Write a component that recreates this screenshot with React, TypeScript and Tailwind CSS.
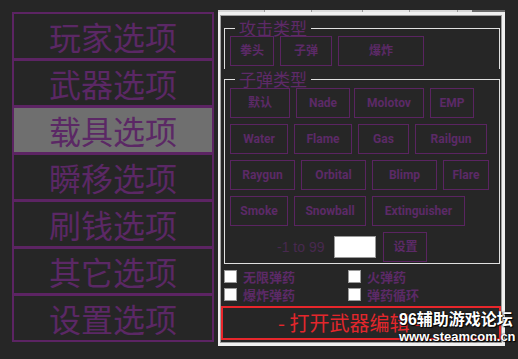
const menu = ["玩家选项", "武器选项", "载具选项", "瞬移选项", "刷钱选项", "其它选项", "设置选项"];

type Btn = { label: string; cls: string };

const attack: Btn[] = [
  { label: "拳头", cls: "w-[44px]" },
  { label: "子弹", cls: "w-[52px] ml-[6px]" },
  { label: "爆炸", cls: "w-[86px] ml-[6px]" },
];

const bulletRows: Btn[][] = [
  [
    { label: "默认", cls: "w-[60px]" },
    { label: "Nade", cls: "w-[54px] ml-[6px]" },
    { label: "Molotov", cls: "w-[70px] ml-[4px]" },
    { label: "EMP", cls: "w-[44px] ml-[6px]" },
  ],
  [
    { label: "Water", cls: "w-[58px]" },
    { label: "Flame", cls: "w-[58px] ml-[6px]" },
    { label: "Gas", cls: "w-[51px] ml-[6px]" },
    { label: "Railgun", cls: "w-[72px] ml-[6px]" },
  ],
  [
    { label: "Raygun", cls: "w-[65px]" },
    { label: "Orbital", cls: "w-[65px] ml-[6px]" },
    { label: "Blimp", cls: "w-[65px] ml-[6px]" },
    { label: "Flare", cls: "w-[46px] ml-[6px]" },
  ],
  [
    { label: "Smoke", cls: "w-[58px]" },
    { label: "Snowball", cls: "w-[72px] ml-[6px]" },
    { label: "Extinguisher", cls: "w-[93px] ml-[6px]" },
  ],
];

const PurpleButton = ({ label, cls }: Btn) => (
  <button
    className={`${cls} h-[30px] shrink-0 border border-[#5a2461] text-[#5c2a67] text-[12px] font-bold flex items-center justify-center font-['Roboto','Noto_Sans_CJK_SC',sans-serif]`}
  >
    {label}
  </button>
);

const GroupTitle = ({ text }: { text: string }) => (
  <legend className="ml-[5px] px-[4px] text-[17px] leading-[16px] text-[#5e2a68] font-['Noto_Sans_CJK_SC',sans-serif]">
    {text}
  </legend>
);

const Check = ({ label }: { label: string }) => (
  <div className="flex items-center w-[124px] h-[13px]">
    <span className="w-[13px] h-[13px] bg-white border border-[#9a9a9a]" />
    <span className="ml-[6px] text-[13px] leading-[13px] font-bold text-[#5c2a67] font-['Noto_Sans_CJK_SC',sans-serif]">
      {label}
    </span>
  </div>
);

export default function App() {
  return (
    <div className="relative w-[518px] h-[359px] overflow-hidden bg-[#262626] flex pl-[12px] pt-[12px] font-['Noto_Sans_CJK_SC',sans-serif]">
      <div className="w-[202px] flex flex-col">
        {menu.map((m, i) => (
          <div
            key={m}
            className={`h-[48px] shrink-0 border-2 border-[#5c2463] flex items-center justify-center text-[32px] leading-none text-[#5b2865] ${
              i === 2 ? "bg-[#6f6f6f]" : ""
            } ${i > 0 ? "-mt-px" : ""}`}
          >
            {m}
          </div>
        ))}
      </div>

      <div className="ml-[4px] -mt-[2px] w-[287px] flex flex-col">
        <div className="h-[2px] flex">
          <div className="w-[47px] bg-[#d6d6d6] border-r border-[#9a9a9a]" />
          <div className="w-[47px] bg-[#e6e6e6] border-r border-[#9a9a9a]" />
          <div className="w-[51px] bg-[#dcdcdc] border-r border-[#9a9a9a]" />
          <div className="w-[47px] bg-[#e6e6e6] border-r border-[#9a9a9a]" />
          <div className="w-[48px] bg-[#dcdcdc] border-r border-[#9a9a9a]" />
          <div className="w-[14px] bg-[#d6d6d6]" />
          <div className="flex-1 bg-[#6a6a6a]" />
        </div>
        <div className="h-[334px] border-[3px] border-l-2 border-[#f0f0f0]">
          <div className="h-full border border-[#a0a0a0] flex flex-col">
            <fieldset className="mt-[4px] ml-[3px] mr-[1px] h-[49px] border border-b-0 border-[#e0e0e0] pl-[5px]">
              <GroupTitle text="攻击类型" />
              <div className="flex">
                {attack.map((b) => (
                  <PurpleButton key={b.label} {...b} />
                ))}
              </div>
            </fieldset>

            <fieldset className="mt-[2px] ml-[3px] mr-[1px] border border-[#e0e0e0] pl-[5px] pt-[1px] pb-[1px]">
              <GroupTitle text="子弹类型" />
              <div className="flex flex-col gap-[6px]">
                {bulletRows.map((row, i) => (
                  <div key={i} className="flex">
                    {row.map((b) => (
                      <PurpleButton key={b.label} {...b} />
                    ))}
                  </div>
                ))}
                <div className="flex items-center h-[30px]">
                  <span className="ml-[47px] text-[14px] text-[#48294f] font-['Liberation_Sans',sans-serif]">
                    -1 to 99
                  </span>
                  <span className="ml-[10px] w-[42px] h-[22px] bg-white border border-[#9a9a9a]" />
                  <PurpleButton label="设置" cls="w-[44px] ml-[7px]" />
                </div>
              </div>
            </fieldset>

            <div className="mt-[6px] ml-[3px] flex flex-col gap-[5px]">
              <div className="flex">
                <Check label="无限弹药" />
                <Check label="火弹药" />
              </div>
              <div className="flex">
                <Check label="爆炸弹药" />
                <Check label="弹药循环" />
              </div>
            </div>

            <button className="mt-[5px] h-[34px] border-2 border-[#e8262b] flex items-center pl-[55px] text-[20px] leading-none text-[#e3262c] whitespace-pre">
              {"- 打开武器编辑 -"}
            </button>
          </div>
        </div>
      </div>

      <div className="absolute left-[399px] top-[310px] flex flex-col items-start whitespace-nowrap text-white font-bold [text-shadow:0_0_2px_#000,1px_1px_1px_#000]">
        <span className="text-[16px] leading-[19px] font-['Liberation_Sans','Noto_Sans_CJK_SC',sans-serif]">
          96辅助游戏论坛
        </span>
        <span className="text-[13px] leading-[16px] font-['Liberation_Sans',sans-serif]">
          www.steamcom.cn
        </span>
      </div>
    </div>
  );
}
